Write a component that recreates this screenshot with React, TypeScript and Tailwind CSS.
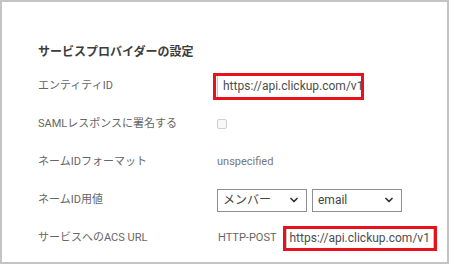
import { ChevronDown } from "lucide-react";

// SAML サービスプロバイダー設定パネル（スクリーンショット再現）

const FONT = { fontFamily: '"Roboto", "Noto Sans CJK JP", sans-serif' };

function Row({ label, children }: { label: string; children: React.ReactNode }) {
  return (
    <div className="flex h-[38px] items-center">
      <div className="w-[179px] shrink-0 text-[11px] text-[#666]">{label}</div>
      <div className="flex items-center">{children}</div>
    </div>
  );
}

function Select({ value }: { value: string }) {
  return (
    <div className="flex h-[23px] w-[90px] items-center justify-between border border-[#8f8f8f] bg-white pl-[5px] pr-[6px]">
      <span className="text-[12px] text-[#444]">{value}</span>
      <ChevronDown size={12} strokeWidth={3.5} className="text-[#333]" />
    </div>
  );
}

export default function App() {
  return (
    <div
      style={FONT}
      className="h-[264px] w-[449px] border-2 border-[#c4c4c4] bg-white pl-[36px] pt-[42px]"
    >
      <h2 className="mb-[7px] text-[12px] leading-4 font-bold text-[#3c3c3c]">
        サービスプロバイダーの設定
      </h2>

      <Row label="エンティティID">
        <div className="-ml-[4px] h-[27px] w-[151px] overflow-hidden border-[3px] border-[#e8121c] bg-white pl-[1px]">
          <div className="flex h-full items-center overflow-hidden whitespace-nowrap border-l border-[#c8c8c8] pl-[5px] text-[12px] text-[#4d4d4d]">
            https://api.clickup.com/v1
          </div>
        </div>
      </Row>

      <Row label="SAMLレスポンスに署名する">
        <span className="block h-[10px] w-[10px] rounded-[2px] border border-[#cfcfcf] bg-[#f8f8f8]" />
      </Row>

      <Row label="ネームIDフォーマット">
        <span className="text-[11px] text-[#777]">unspecified</span>
      </Row>

      <Row label="ネームID用値">
        <div className="flex gap-[5px]">
          <Select value="メンバー" />
          <Select value="email" />
        </div>
      </Row>

      <Row label="サービスへのACS URL">
        <span className="ml-[1px] text-[11px] text-[#666]">HTTP-POST</span>
        <div className="ml-[6px] h-[25px] w-[154px] overflow-hidden border-[3px] border-[#e8121c] bg-white">
          <div className="flex h-full items-center overflow-hidden whitespace-nowrap border-x border-[#c8c8c8] pl-[3px] text-[12px] text-[#4d4d4d]">
            https://api.clickup.com/v1
          </div>
        </div>
      </Row>
    </div>
  );
}
